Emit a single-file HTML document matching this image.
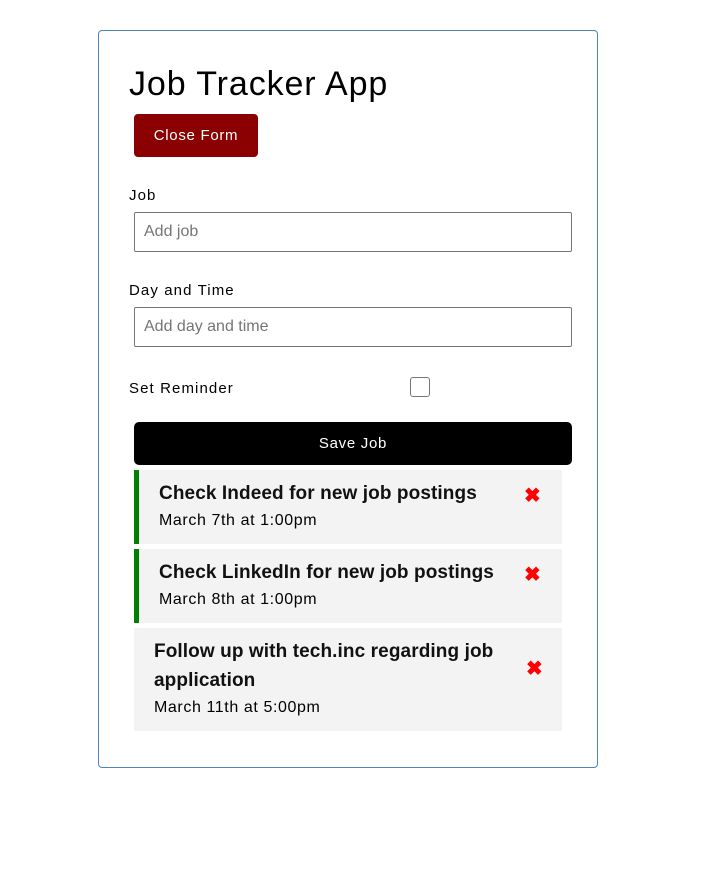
<!DOCTYPE html>
<html><head><meta charset="utf-8"><style>
*{box-sizing:border-box;margin:0;padding:0}
body{width:706px;height:886px;background:#fff;font-family:"Liberation Sans",sans-serif;color:#000;position:relative;overflow:hidden}
.a{position:absolute;white-space:nowrap}
.box{position:absolute;left:98px;top:30px;width:500px;height:738px;border:1px solid #4a86c0;border-radius:4px}
h1{position:absolute;left:129px;top:65px;font-size:34px;font-weight:normal;letter-spacing:0.9px}
.btn{position:absolute;border-radius:4px;color:#fff;font-size:15px;display:flex;align-items:center;justify-content:center;letter-spacing:0.7px}
.inp{position:absolute;left:134px;width:438px;height:40px;border:1px solid #767676;border-radius:2px;color:#757575;font-size:16px;padding-left:9px;display:flex;align-items:center}
.lbl{font-size:15px;letter-spacing:1.1px}
.item{position:absolute;left:134px;width:428px;background:#f3f3f3}
.item.g{border-left:5px solid #008000}
.t{position:absolute;font-size:19px;font-weight:bold;letter-spacing:0.1px;color:#111}
.d{position:absolute;font-size:16px;letter-spacing:0.6px}
.x{position:absolute;color:#f00;font-size:20px;font-weight:bold}
</style></head><body>
<div class="box"></div>
<h1>Job Tracker App</h1>
<div class="btn" style="left:134px;top:114px;width:124px;height:43px;background:#8b0000">Close Form</div>
<div class="a lbl" style="left:129px;top:187px">Job</div>
<div class="inp" style="top:212px">Add job</div>
<div class="a lbl" style="left:129px;top:282px">Day and Time</div>
<div class="inp" style="top:307px">Add day and time</div>
<div class="a lbl" style="left:129px;top:380px">Set Reminder</div>
<div class="a" style="left:410px;top:377px;width:20px;height:20px;border:1px solid #767676;border-radius:3px"></div>
<div class="btn" style="left:134px;top:422px;width:438px;height:43px;background:#000;border-radius:5px">Save Job</div>

<div class="item g" style="top:470px;height:74px"></div>
<div class="a t" style="left:159px;top:483px">Check Indeed for new job postings</div>
<div class="a d" style="left:159px;top:512px">March 7th at 1:00pm</div>
<div class="a x" style="left:524px;top:483px">✖</div>

<div class="item g" style="top:549px;height:74px"></div>
<div class="a t" style="left:159px;top:562px">Check LinkedIn for new job postings</div>
<div class="a d" style="left:159px;top:591px">March 8th at 1:00pm</div>
<div class="a x" style="left:524px;top:562px">✖</div>

<div class="item" style="top:628px;height:103px"></div>
<div class="a t" style="left:154px;top:641px">Follow up with tech.inc regarding job</div>
<div class="a t" style="left:154px;top:670px">application</div>
<div class="a d" style="left:154px;top:699px">March 11th at 5:00pm</div>
<div class="a x" style="left:526px;top:656px">✖</div>
</body></html>
